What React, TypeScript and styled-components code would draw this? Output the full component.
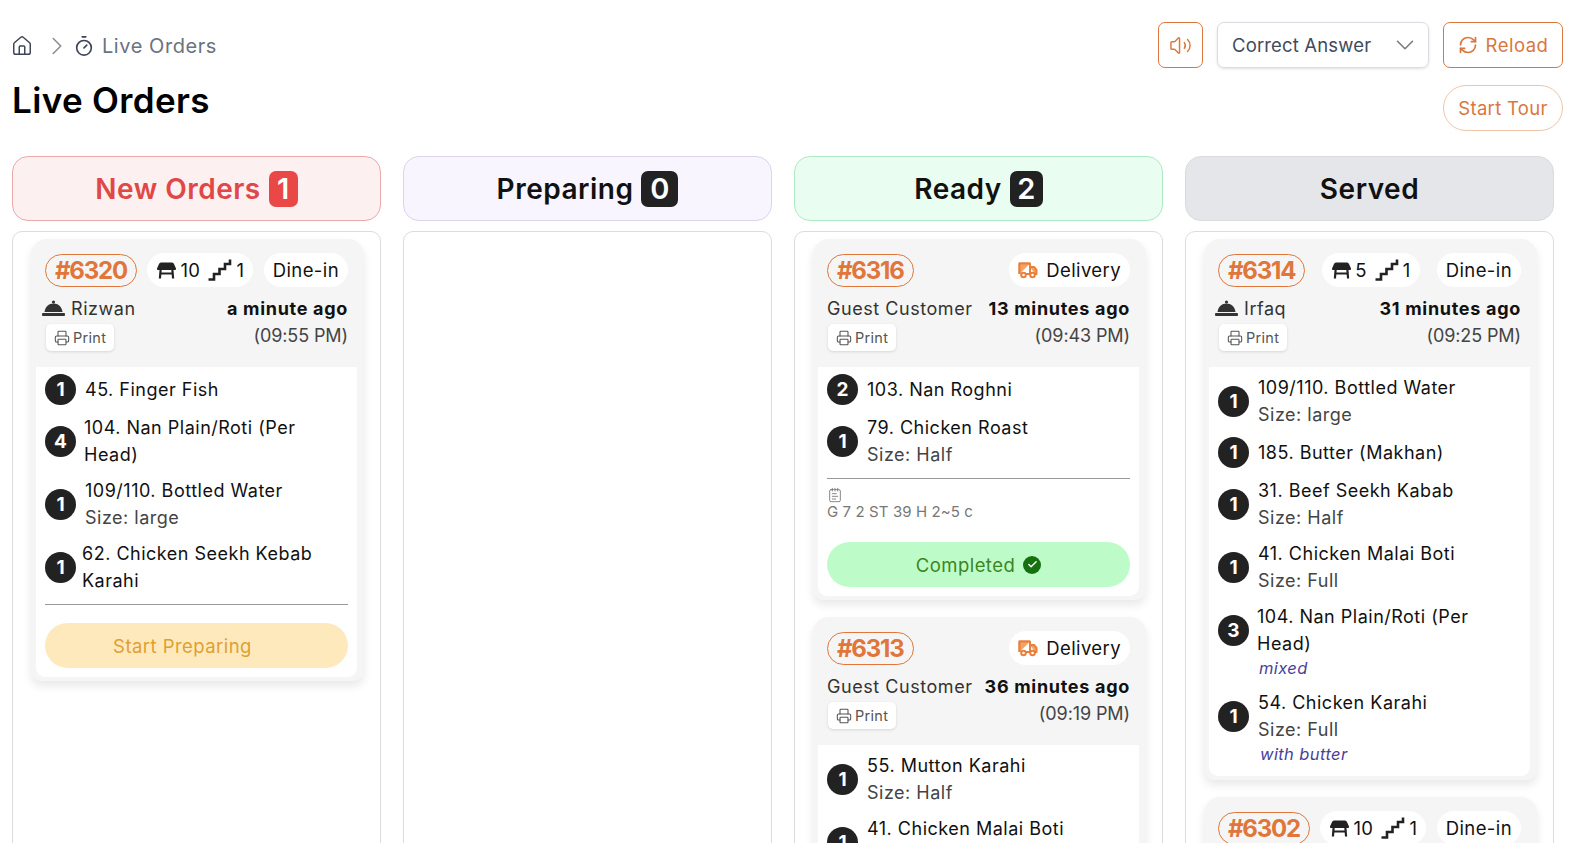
import React from "react";
import styled, { createGlobalStyle } from "styled-components";
import { House, Timer, ChevronRight, ChevronDown, Volume2, RefreshCw, Printer, NotepadText, Check } from "lucide-react";

const Global = createGlobalStyle`
  html, body { margin: 0; padding: 0; height: 843px; overflow: hidden; background: #fff; }
  body { font-family: Inter, "Liberation Sans", sans-serif; color: #111; }
  * { box-sizing: border-box; }
`;

const Page = styled.div`
  padding: 22px 8px 0 12px;
  height: 843px;
  overflow: hidden;
`;
const TopBar = styled.header`
  display: flex;
  justify-content: space-between;
  align-items: flex-start;
  height: 134px;
`;
const TitleBlock = styled.div`
  display: flex;
  flex-direction: column;
`;
const Crumbs = styled.nav`
  display: flex;
  align-items: center;
  height: 47px;
  color: #6b7280;
  font-size: 20px;
  letter-spacing: 0.55px;
  font-weight: 400;
`;
const CrumbHome = styled.span`
  display: flex;
  color: #3d4456;
  margin: 0 9px 0 -1px;
`;
const CrumbSep = styled.span`
  display: flex;
  color: #8a8f98;
  margin-right: 1px;
`;
const CrumbTimer = styled.span`
  display: flex;
  color: #3d4456;
  margin-right: 7px;
`;
const Title = styled.h1`
  margin: 11px 0 0;
  font-size: 35px;
  line-height: 40px;
  font-weight: 600;
  letter-spacing: 0.35px;
  color: #000;
`;
const Actions = styled.div`
  display: flex;
  flex-direction: column;
  align-items: flex-end;
  gap: 17px;
`;
const ActionRow = styled.div`
  display: flex;
  gap: 14px;
`;
const OutlineButton = styled.button<{ $width: number }>`
  display: flex;
  align-items: center;
  justify-content: center;
  gap: 8px;
  width: ${(p) => p.$width}px;
  height: 46px;
  background: #fff;
  border: 1px solid #d9773f;
  border-radius: 7px;
  color: #d9773f;
  font: 400 18.5px Inter, sans-serif;
  letter-spacing: 0.5px;
  padding: 0;
`;
const SelectBox = styled.div`
  display: flex;
  align-items: center;
  justify-content: space-between;
  width: 212px;
  height: 46px;
  padding: 0 8px 0 14px;
  border: 1px solid #d9dce1;
  border-radius: 7px;
  box-shadow: 0 1px 3px rgba(0, 0, 0, 0.12);
  color: #414b5a;
  font-size: 18.5px;
  letter-spacing: 0.15px;
  svg { color: #777d86; }
`;
const TourButton = styled.button`
  width: 120px;
  height: 46px;
  background: #fff;
  border: 1px solid #efc5a9;
  border-radius: 23px;
  color: #d9773f;
  font: 400 18.5px Inter, sans-serif;
  letter-spacing: 0.3px;
  padding: 0;
`;
const Board = styled.main`
  display: grid;
  grid-template-columns: repeat(4, 369px);
  gap: 22px;
  width: 1542px;
`;
const Column = styled.section`
  display: flex;
  flex-direction: column;
  gap: 10px;
`;
const tones = {
  red: { bg: "#fdf0f0", line: "#eba9a9", fg: "#e04848", badge: "#ea4747" },
  violet: { bg: "#f9f5fe", line: "#dcd3ec", fg: "#111", badge: "#222" },
  green: { bg: "#eafdf1", line: "#aee9c6", fg: "#111", badge: "#222" },
  gray: { bg: "#e4e6e9", line: "#d9dbde", fg: "#111", badge: "#222" },
};
type Tone = keyof typeof tones;
const ColumnHead = styled.div<{ $tone: Tone }>`
  display: flex;
  align-items: center;
  justify-content: center;
  gap: 8px;
  height: 65px;
  border-radius: 16px;
  border: 1px solid ${(p) => tones[p.$tone].line};
  background: ${(p) => tones[p.$tone].bg};
  color: ${(p) => tones[p.$tone].fg};
  font-size: 28px;
  font-weight: 600;
  letter-spacing: 0.5px;
`;
const HeadCount = styled.span<{ $tone: Tone; $width: number }>`
  display: flex;
  align-items: center;
  justify-content: center;
  width: ${(p) => p.$width}px;
  height: 36px;
  border-radius: 7px;
  background: ${(p) => tones[p.$tone].badge};
  color: #fff;
  font-size: 29px;
  font-weight: 600;
  letter-spacing: 0;
`;
const Lane = styled.div`
  display: flex;
  flex-direction: column;
  gap: 17px;
  height: 640px;
  padding: 7px 16px 0 18px;
  border: 1px solid #dcdcdc;
  border-radius: 10px 10px 0 0;
  overflow: hidden;
`;
const Card = styled.article`
  flex: none;
  background: #f5f5f5;
  border-radius: 16px 16px 10px 10px;
  padding: 14px 0 4px;
  box-shadow: 0 5px 10px rgba(0, 0, 0, 0.09);
`;
const CardTop = styled.div`
  display: flex;
  flex-direction: column;
  padding: 0 16px 0 14px;
`;
const ChipRow = styled.div`
  display: flex;
  justify-content: space-between;
  align-items: center;
  height: 34px;
`;
const OrderId = styled.span`
  display: flex;
  align-items: center;
  height: 33px;
  padding: 0 9px;
  border: 1px solid #e0763a;
  border-radius: 17px;
  color: #e0763a;
  font-size: 24px;
  font-weight: 700;
  letter-spacing: -1.2px;
`;
const Chip = styled.span`
  display: flex;
  align-items: center;
  gap: 8px;
  height: 34px;
  padding: 0 9px;
  background: #fff;
  border-radius: 17px;
  font-size: 18.5px;
  letter-spacing: 0.4px;
  color: #111;
`;
const ChipPart = styled.span`
  display: flex;
  align-items: center;
  gap: 3px;
`;
const MetaRow = styled.div`
  display: flex;
  justify-content: space-between;
  align-items: flex-start;
  margin-top: 8px;
`;
const MetaLeft = styled.div`
  display: flex;
  flex-direction: column;
  align-items: flex-start;
`;
const MetaRight = styled.div`
  display: flex;
  flex-direction: column;
  align-items: flex-end;
`;
const Customer = styled.div`
  display: flex;
  align-items: center;
  gap: 6px;
  height: 27px;
  font-size: 18px;
  letter-spacing: 0.55px;
  color: #333;
  svg { margin-left: -3px; }
`;
const Ago = styled.div`
  height: 27px;
  line-height: 27px;
  font-size: 18px;
  font-weight: 700;
  letter-spacing: 0.7px;
`;
const Clock = styled.div`
  height: 27px;
  line-height: 27px;
  font-size: 18px;
  letter-spacing: -0.1px;
  color: #444;
`;
const PrintButton = styled.button`
  display: flex;
  align-items: center;
  gap: 3px;
  height: 27px;
  margin: 2px 0 0 1px;
  padding: 0 8px;
  background: #fff;
  border: none;
  border-radius: 5px;
  box-shadow: 0 1px 3px rgba(0, 0, 0, 0.13);
  color: #555;
  font: 400 14.5px Inter, sans-serif;
  letter-spacing: 0.3px;
`;
const Items = styled.div`
  margin: 16px 7px 0 5px;
  padding: 7px 9px 10px;
  background: #fff;
  border-radius: 0 0 9px 9px;
  display: flex;
  flex-direction: column;
`;
const ItemList = styled.div`
  display: flex;
  flex-direction: column;
  gap: 9px;
`;
const ItemRow = styled.div`
  display: flex;
  align-items: flex-start;
`;
const QtyBlock = styled.div<{ $h: number; $gap: number }>`
  flex: none;
  display: flex;
  align-items: center;
  height: ${(p) => p.$h}px;
  margin-right: ${(p) => p.$gap}px;
`;
const Qty = styled.span`
  display: flex;
  align-items: center;
  justify-content: center;
  width: 31px;
  height: 31px;
  border-radius: 50%;
  background: #222;
  color: #fff;
  font-size: 19px;
  font-weight: 700;
`;
const ItemBody = styled.div`
  display: flex;
  flex-direction: column;
`;
const ItemName = styled.div<{ $single: boolean }>`
  font-size: 18px;
  line-height: ${(p) => (p.$single ? 31 : 27)}px;
  letter-spacing: 0.5px;
  color: #111;
`;
const ItemSize = styled.div`
  font-size: 18px;
  line-height: 27px;
  letter-spacing: 0.5px;
  color: #444;
`;
const ItemNote = styled.div`
  font-size: 16.5px;
  line-height: 23px;
  font-style: italic;
  letter-spacing: 0.4px;
  color: #4a3f9a;
  margin-left: 2px;
`;
const Rule = styled.hr`
  width: 100%;
  margin: 10px 0 0;
  border: none;
  border-top: 1px solid #999;
`;
const NoteBlock = styled.div`
  display: flex;
  flex-direction: column;
  align-items: flex-start;
  margin: 8px 0 4px;
  color: #777;
  font-size: 15px;
  letter-spacing: 0.1px;
  line-height: 17px;
`;
const ActionPill = styled.button<{ $tone: "amber" | "green" }>`
  display: flex;
  align-items: center;
  justify-content: center;
  gap: 8px;
  height: 45px;
  margin: 18px 0 -1px;
  padding: ${(p) => (p.$tone === "amber" ? "0 28px 0 0" : "0")};
  border: none;
  border-radius: 23px;
  font: 400 18.5px Inter, sans-serif;
  letter-spacing: 0.45px;
  background: ${(p) => (p.$tone === "amber" ? "#fee9bd" : "#bdfcc9")};
  color: ${(p) => (p.$tone === "amber" ? "#e0a030" : "#3b8620")};
`;
const DoneMark = styled.span`
  display: flex;
  align-items: center;
  justify-content: center;
  width: 18px;
  height: 18px;
  border-radius: 50%;
  background: #16700f;
  color: #fff;
`;

const TableIcon = () => (
  <svg width="21" height="17" viewBox="0 0 21 17" fill="#222">
    <path d="M5 0.500h11q1.500 0 2 1.500l2 4.500q0.300 1.500-1 1.500H2q-1.300 0-1-1.500L3 2q0.500-1.500 2-1.500z" />
    <path d="M3.500 8h2.200l-0.700 8.500H2.800z" />
    <path d="M15.300 8h2.200l0.700 8.500h-2.200z" />
    <rect x="4.500" y="10.500" width="12" height="2" />
  </svg>
);
const StairIcon = () => (
  <svg width="25" height="22" viewBox="0 0 25 22" fill="none" stroke="#222" strokeWidth="2.600">
    <path d="M0.500 20.500h5.500v-5.500h5.500v-5h5.500V5h5V0.500" />
  </svg>
);
const ClocheIcon = () => (
  <svg width="23" height="17" viewBox="0 0 23 17" fill="#333">
    <circle cx="11.500" cy="2" r="1.600" />
    <path d="M2.500 12C3 6.800 7 3.500 11.500 3.500S20 6.800 20.500 12z" />
    <rect x="0" y="13" width="23" height="3" rx="1" />
  </svg>
);
const TruckIcon = () => (
  <svg width="20" height="18" viewBox="0 0 20 18" fill="none" stroke="#e8803c" strokeWidth="2" strokeLinejoin="round">
    <path d="M1.500 13V2.500h10.500V13H8" />
    <path d="M12 6h4l2.500 3v4H17" fill="#f2a468" />
    <path d="M12 2.500h-10.500V13" fill="#f2a468" />
    <circle cx="5.500" cy="14" r="2.300" />
    <circle cx="14.500" cy="14" r="2.300" />
  </svg>
);

type Item = { qty: number; name: string; size?: string; note?: string; gap?: number };
type Order = {
  id: string;
  table?: [string, string];
  customer?: string;
  waiter?: boolean;
  ago?: string;
  time?: string;
  items: Item[];
  memo?: string;
  action?: "start" | "done";
};

const ItemLine = ({ item }: { item: Item }) => {
  const single = !item.size && !item.name.includes("\n");
  const lines = item.name.split("\n");
  return (
    <ItemRow>
      <QtyBlock $h={single ? 31 : 54} $gap={item.gap ?? 9}>
        <Qty>{item.qty}</Qty>
      </QtyBlock>
      <ItemBody>
        <ItemName $single={single}>
          {lines.map((l, i) => (
            <div key={i}>{l}</div>
          ))}
        </ItemName>
        {item.size && <ItemSize>Size: {item.size}</ItemSize>}
        {item.note && <ItemNote>{item.note}</ItemNote>}
      </ItemBody>
    </ItemRow>
  );
};

const OrderCard = ({ o }: { o: Order }) => (
  <Card>
    <CardTop>
      <ChipRow>
        <OrderId>{o.id}</OrderId>
        {o.table ? (
          <>
            <Chip>
              <ChipPart>
                <TableIcon />
                {o.table[0]}
              </ChipPart>
              <ChipPart>
                <StairIcon />
                {o.table[1]}
              </ChipPart>
            </Chip>
            <Chip>Dine-in</Chip>
          </>
        ) : (
          <Chip>
            <TruckIcon />
            Delivery
          </Chip>
        )}
      </ChipRow>
      {o.ago && (
        <MetaRow>
          <MetaLeft>
            <Customer>
              {o.waiter && <ClocheIcon />}
              {o.customer}
            </Customer>
            <PrintButton>
              <Printer size={16} strokeWidth={1.6} />
              Print
            </PrintButton>
          </MetaLeft>
          <MetaRight>
            <Ago>{o.ago}</Ago>
            <Clock>({o.time})</Clock>
          </MetaRight>
        </MetaRow>
      )}
    </CardTop>
    {o.items.length > 0 && (
      <Items>
        <ItemList>
          {o.items.map((it, i) => (
            <ItemLine key={i} item={it} />
          ))}
        </ItemList>
        {(o.memo || o.action) && <Rule />}
        {o.memo && (
          <NoteBlock>
            <NotepadText size={16} strokeWidth={1.3} />
            {o.memo}
          </NoteBlock>
        )}
        {o.action === "start" && <ActionPill $tone="amber">Start Preparing</ActionPill>}
        {o.action === "done" && (
          <ActionPill $tone="green">
            Completed
            <DoneMark>
              <Check size={11} strokeWidth={3} />
            </DoneMark>
          </ActionPill>
        )}
      </Items>
    )}
  </Card>
);

const countWidths: Record<number, number> = { 0: 37, 1: 29, 2: 33 };

const columns: { title: string; tone: Tone; count?: number; orders: Order[] }[] = [
  {
    title: "New Orders",
    tone: "red",
    count: 1,
    orders: [
      {
        id: "#6320",
        table: ["10", "1"],
        customer: "Rizwan",
        waiter: true,
        ago: "a minute ago",
        time: "09:55 PM",
        action: "start",
        items: [
          { qty: 1, name: "45. Finger Fish" },
          { qty: 4, name: "104. Nan Plain/Roti (Per\nHead)", gap: 8 },
          { qty: 1, name: "109/110. Bottled Water", size: "large" },
          { qty: 1, name: "62. Chicken Seekh Kebab\nKarahi", gap: 6 },
        ],
      },
    ],
  },
  { title: "Preparing", tone: "violet", count: 0, orders: [] },
  {
    title: "Ready",
    tone: "green",
    count: 2,
    orders: [
      {
        id: "#6316",
        customer: "Guest Customer",
        ago: "13 minutes ago",
        time: "09:43 PM",
        memo: "G 7 2 ST 39 H 2~5 c",
        action: "done",
        items: [
          { qty: 2, name: "103. Nan Roghni" },
          { qty: 1, name: "79. Chicken Roast", size: "Half" },
        ],
      },
      {
        id: "#6313",
        customer: "Guest Customer",
        ago: "36 minutes ago",
        time: "09:19 PM",
        items: [
          { qty: 1, name: "55. Mutton Karahi", size: "Half" },
          { qty: 1, name: "41. Chicken Malai Boti", size: "Full" },
        ],
      },
    ],
  },
  {
    title: "Served",
    tone: "gray",
    orders: [
      {
        id: "#6314",
        table: ["5", "1"],
        customer: "Irfaq",
        waiter: true,
        ago: "31 minutes ago",
        time: "09:25 PM",
        items: [
          { qty: 1, name: "109/110. Bottled Water", size: "large" },
          { qty: 1, name: "185. Butter (Makhan)" },
          { qty: 1, name: "31. Beef Seekh Kabab", size: "Half" },
          { qty: 1, name: "41. Chicken Malai Boti", size: "Full" },
          { qty: 3, name: "104. Nan Plain/Roti (Per\nHead)", note: "mixed", gap: 8 },
          { qty: 1, name: "54. Chicken Karahi", size: "Full", note: "with butter" },
        ],
      },
      { id: "#6302", table: ["10", "1"], items: [] },
    ],
  },
];

export default function App() {
  return (
    <>
      <Global />
      <Page>
        <TopBar>
          <TitleBlock>
            <Crumbs>
              <CrumbHome>
                <House size={22} strokeWidth={1.6} />
              </CrumbHome>
              <CrumbSep>
                <ChevronRight size={30} strokeWidth={1.3} />
              </CrumbSep>
              <CrumbTimer>
                <Timer size={22} strokeWidth={1.8} />
              </CrumbTimer>
              Live Orders
            </Crumbs>
            <Title>Live Orders</Title>
          </TitleBlock>
          <Actions>
            <ActionRow>
              <OutlineButton $width={45}>
                <Volume2 size={23} strokeWidth={1.5} />
              </OutlineButton>
              <SelectBox>
                Correct Answer
                <ChevronDown size={30} strokeWidth={1.3} />
              </SelectBox>
              <OutlineButton $width={120}>
                <RefreshCw size={20} strokeWidth={2} />
                Reload
              </OutlineButton>
            </ActionRow>
            <TourButton>Start Tour</TourButton>
          </Actions>
        </TopBar>
        <Board>
          {columns.map((c) => (
            <Column key={c.title}>
              <ColumnHead $tone={c.tone}>
                {c.title}
                {c.count !== undefined && (
                  <HeadCount $tone={c.tone} $width={countWidths[c.count]}>
                    {c.count}
                  </HeadCount>
                )}
              </ColumnHead>
              <Lane>
                {c.orders.map((o) => (
                  <OrderCard key={o.id} o={o} />
                ))}
              </Lane>
            </Column>
          ))}
        </Board>
      </Page>
    </>
  );
}
